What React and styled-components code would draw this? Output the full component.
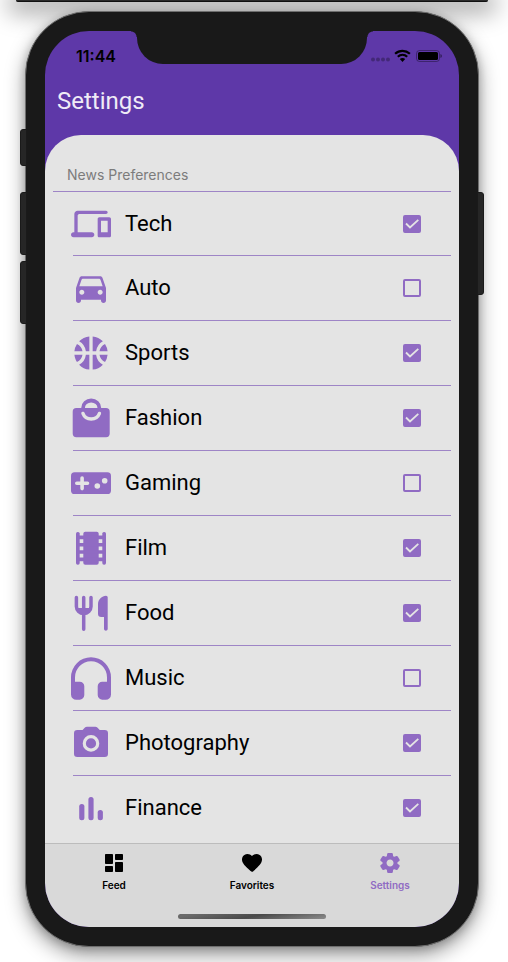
import React, { useState } from "react";
import styled, { createGlobalStyle, css } from "styled-components";
import { MdSportsBasketball } from "react-icons/md";

const colors = {
  header: "#5e38a8",
  accent: "#906bc3",
  rule: "#9e85c6",
  sheet: "#e4e4e4",
  tabs: "#d9d9d9",
  bezel: "#191919",
};

const GlobalStyle = createGlobalStyle`
  *, *::before, *::after { box-sizing: border-box; }
  body {
    margin: 0;
    background: #fff;
    font-family: Roboto, sans-serif;
  }
`;

const Page = styled.main`
  overflow: hidden;
  padding-bottom: 15px;
`;

const UpperDevice = styled.div`
  height: 2px;
  margin: 0 20px 0 16px;
  background: #2b2b2b;
  border-bottom: 1px solid #111;
  border-radius: 0 0 4px 4px;
  box-shadow: 0 2px 24px 8px rgba(0, 0, 0, 0.4);
`;

const Phone = styled.div`
  position: relative;
  margin: 9px 29px 0 25px;
  padding: 19px;
  border: 1px solid #6e6e6e;
  border-radius: 64px;
  background: ${colors.bezel};
  box-shadow: 0 8px 20px rgba(0, 0, 0, 0.4), 0 2px 8px rgba(0, 0, 0, 0.2);
`;

const SideButton = styled.span`
  position: absolute;
  top: ${(p) => p.$top}px;
  height: ${(p) => p.$height}px;
  width: 7px;
  background: #262626;
  border: 1px solid #1a1a1a;
  ${(p) =>
    p.$side === "left"
      ? css`
          left: -6px;
          border-radius: 3px 0 0 3px;
        `
      : css`
          right: -6px;
          border-radius: 0 3px 3px 0;
        `}
`;

const Screen = styled.div`
  position: relative;
  overflow: hidden;
  border-radius: 44px;
  background: ${colors.header};
`;

const Notch = styled.div`
  position: absolute;
  top: 0;
  left: 50%;
  width: 230px;
  height: 33px;
  transform: translateX(-50%);
  background: ${colors.bezel};
  border-radius: 0 0 26px 26px;

  &::before,
  &::after {
    content: "";
    position: absolute;
    top: 0;
    width: 6px;
    height: 6px;
  }
  &::before {
    right: 100%;
    background: radial-gradient(circle at 0 100%, transparent 5px, ${colors.bezel} 6px);
  }
  &::after {
    left: 100%;
    background: radial-gradient(circle at 100% 100%, transparent 5px, ${colors.bezel} 6px);
  }
`;

const StatusBar = styled.div`
  display: flex;
  align-items: center;
  justify-content: space-between;
  height: 50px;
  padding: 0 17px 0 31px;
`;

const Clock = styled.time`
  font: 600 16px/20px Inter, sans-serif;
  color: #000;
`;

const Indicators = styled.svg`
  width: 72px;
  height: 14px;
`;

const Title = styled.h1`
  margin: 0;
  padding: 4px 12px 18px;
  font: 400 24px/32px Roboto, sans-serif;
  color: #efebf6;
`;

const Sheet = styled.section`
  padding: 28px 8px 3px;
  border-radius: 36px 36px 0 0;
  background: ${colors.sheet};
`;

const SectionTitle = styled.h2`
  margin: 0;
  padding: 2px 14px 6px;
  border-bottom: 1px solid ${colors.rule};
  font: 400 14px/20px Inter, sans-serif;
  color: #7c7c7c;
`;

const List = styled.ul`
  margin: 0;
  padding: 0 0 0 20px;
  list-style: none;
`;

const Row = styled.li`
  height: 65px;

  &:first-child {
    height: 63px;
  }
  & + & {
    border-top: 1px solid ${colors.rule};
  }
`;

const RowLabel = styled.label`
  display: flex;
  align-items: center;
  gap: 14px;
  height: 100%;
  margin-left: -2px;
  padding-right: 30px;
  font-size: 22px;
  line-height: 28px;
  color: #000;
`;

const CategoryIcon = styled.svg`
  flex: none;
  width: 40px;
  height: 44px;
  fill: currentColor;
  color: ${colors.accent};
`;

const RowText = styled.span`
  flex: 1;
`;

const CheckWrap = styled.span`
  display: grid;
  place-items: center;

  & > * {
    grid-area: 1 / 1;
  }
`;

const CheckInput = styled.input`
  appearance: none;
  width: 18px;
  height: 18px;
  margin: 0;
  border: 2px solid ${colors.accent};
  border-radius: 2px;

  &:checked {
    background: ${colors.accent};
  }
  &:checked + svg {
    visibility: visible;
  }
`;

const CheckMark = styled.svg`
  visibility: hidden;
  width: 18px;
  height: 18px;
  pointer-events: none;
`;

const TabBar = styled.nav`
  display: grid;
  grid-template-columns: repeat(3, 1fr);
  padding-top: 7px;
  border-top: 1px solid #bcbcbc;
  background: ${colors.tabs};
`;

const Tab = styled.button`
  display: flex;
  flex-direction: column;
  align-items: center;
  gap: 4px;
  padding: 0;
  border: 0;
  background: none;
  font: 600 10px/12px Inter, sans-serif;
  color: ${(p) => (p.$active ? colors.accent : "#000")};
`;

const TabIcon = styled.svg`
  width: 24px;
  height: 24px;
  fill: currentColor;
`;

const HomeArea = styled.div`
  display: flex;
  justify-content: center;
  padding: 23px 0 8px;
  background: ${colors.tabs};
`;

const HomeIndicator = styled.div`
  width: 148px;
  height: 5px;
  border-radius: 3px;
  background: linear-gradient(170deg, #6a6a6a 10%, #4a4a4a 50%, #858585 95%);
`;

/* 24-unit glyphs are centred in the 40x44 icon box. */
const Glyph = ({ children }) => (
  <g transform="translate(0 2) scale(1.6667)">{children}</g>
);

const icons = {
  tech: (
    <Glyph>
      <path d="M4 7c0-.55.45-1 1-1h16c.55 0 1-.45 1-1s-.45-1-1-1H4c-1.1 0-2 .9-2 2v11h-.5c-.83 0-1.5.67-1.5 1.5S.67 20 1.5 20h11c.83 0 1.5-.67 1.5-1.5s-.67-1.5-1.5-1.5H4V7zm19 1h-6c-.55 0-1 .45-1 1v10c0 .55.45 1 1 1h6c.55 0 1-.45 1-1V9c0-.55-.45-1-1-1zm-1 9h-4v-7h4v7z" />
    </Glyph>
  ),
  auto: (
    <Glyph>
      <path d="M18.92 6.01C18.72 5.42 18.16 5 17.5 5h-11c-.66 0-1.21.42-1.42 1.01L3 12v7.5c0 .82.67 1.5 1.5 1.5S6 20.32 6 19.5V19h12v.5c0 .82.67 1.5 1.5 1.5s1.5-.68 1.5-1.5V12l-2.08-5.99zM6.5 16c-.83 0-1.5-.67-1.5-1.5S5.67 13 6.5 13s1.5.67 1.5 1.5S7.33 16 6.5 16zm11 0c-.83 0-1.5-.67-1.5-1.5s.67-1.5 1.5-1.5 1.5.67 1.5 1.5-.67 1.5-1.5 1.5zM5 11l1.27-3.82c.14-.4.52-.68.95-.68h9.56c.43 0 .81.28.95.68L19 11H5z" />
    </Glyph>
  ),
  sports: <MdSportsBasketball x="0" y="2" size={40} />,
  fashion: (
    <>
      <path
        fillRule="evenodd"
        d="M5.5 12H10.2A10 9.5 0 0 1 30.2 12H35A3.7 3.7 0 0 1 38.7 15.7V37.6A3.7 3.7 0 0 1 35 41.3H5.4A3.7 3.7 0 0 1 1.7 37.6V15.7A3.7 3.7 0 0 1 5.5 12ZM13.9 12H26.5A6.3 5.5 0 0 0 13.9 12Z"
      />
      <path
        d="M12 17.5C13.4 21.3 16.5 23 20.2 23S27 21.3 28.4 17.5"
        fill="none"
        stroke={colors.sheet}
        strokeWidth="3.5"
        strokeLinecap="round"
      />
    </>
  ),
  gaming: (
    <>
      <rect x="0" y="11.3" width="40" height="21.7" rx="3.6" />
      <path
        d="M5.8 22.3H16.5M11.1 17V27.6"
        stroke={colors.sheet}
        strokeWidth="3.6"
        strokeLinecap="round"
      />
      <circle cx="26.3" cy="25" r="2.8" fill={colors.sheet} />
      <circle cx="33.7" cy="19.7" r="2.8" fill={colors.sheet} />
    </>
  ),
  film: (
    <>
      <rect x="12.3" y="5.7" width="15.4" height="33" rx="2" />
      <rect x="5" y="5.9" width="3.7" height="32.8" rx="1.7" />
      <rect x="31.3" y="5.9" width="3.7" height="32.8" rx="1.7" />
      <path d="M7 9.5H33V13.3H7ZM7 17H33V20.6H7ZM7 24.3H33V27.7H7ZM7 31.6H33V35.3H7Z" />
    </>
  ),
  food: (
    <>
      <path
        d="M5.4 6.4V15.5A7.3 6.9 0 0 0 20 15.5V6.4M12.7 6.4V38.3M6.5 18.7H19"
        fill="none"
        stroke="currentColor"
        strokeWidth="3.5"
        strokeLinecap="round"
      />
      <path d="M36.7 6.3V38.2A1.9 1.9 0 0 1 33 38.2V26H30.2A3.2 3.2 0 0 1 27 22.8V13C27 8.5 31 4.7 35 4.7Q36.7 4.7 36.7 6.3Z" />
    </>
  ),
  music: (
    <path d="M0 21.3A20 20 0 0 1 40 21.3V38.4A5.3 5.3 0 0 1 34.7 43.7H31.3A4.6 4.6 0 0 1 26.7 39.1V30.3A4.6 4.6 0 0 1 31.3 25.7H36V21.3A16 16 0 0 0 4 21.3V25.7H8.7A4.6 4.6 0 0 1 13.3 30.3V39.1A4.6 4.6 0 0 1 8.7 43.7H5.3A5.3 5.3 0 0 1 0 38.4Z" />
  ),
  photography: (
    <>
      <path d="M6.3 9H11.6L13.7 6.7Q14.6 5.7 16 5.7H24.3Q25.7 5.7 26.6 6.7L28.7 9H33.7A3.3 3.3 0 0 1 37 12.3V32.7A3.3 3.3 0 0 1 33.7 36H6.3A3.3 3.3 0 0 1 3 32.7V12.3A3.3 3.3 0 0 1 6.3 9Z" />
      <circle cx="20" cy="22.4" r="6.7" fill="none" stroke={colors.sheet} strokeWidth="3.2" />
    </>
  ),
  finance: (
    <>
      <rect x="8.2" y="18" width="5.2" height="16.2" rx="2.5" />
      <rect x="17.4" y="11" width="5.2" height="23.2" rx="2.5" />
      <rect x="26.7" y="24" width="5.2" height="10.2" rx="2.5" />
    </>
  ),
};

const categories = [
  ["tech", "Tech", true],
  ["auto", "Auto", false],
  ["sports", "Sports", true],
  ["fashion", "Fashion", true],
  ["gaming", "Gaming", false],
  ["film", "Film", true],
  ["food", "Food", true],
  ["music", "Music", false],
  ["photography", "Photography", true],
  ["finance", "Finance", true],
];

const tabs = [
  {
    name: "Feed",
    path: "M4 13h6c.55 0 1-.45 1-1V4c0-.55-.45-1-1-1H4c-.55 0-1 .45-1 1v8c0 .55.45 1 1 1zm0 8h6c.55 0 1-.45 1-1v-4c0-.55-.45-1-1-1H4c-.55 0-1 .45-1 1v4c0 .55.45 1 1 1zm10 0h6c.55 0 1-.45 1-1v-8c0-.55-.45-1-1-1h-6c-.55 0-1 .45-1 1v8c0 .55.45 1 1 1zM13 4v4c0 .55.45 1 1 1h6c.55 0 1-.45 1-1V4c0-.55-.45-1-1-1h-6c-.55 0-1 .45-1 1z",
  },
  {
    name: "Favorites",
    path: "M13.35 20.13c-.76.69-1.93.69-2.69-.01l-.11-.1C5.3 15.27 1.87 12.16 2 8.28c.06-1.7.93-3.33 2.34-4.29 2.64-1.8 5.9-.96 7.66 1.1 1.76-2.06 5.02-2.91 7.66-1.1 1.41.96 2.28 2.59 2.34 4.29.14 3.88-3.3 6.99-8.55 11.76l-.1.09z",
  },
  {
    name: "Settings",
    path: "M19.5 12c0-.23-.01-.45-.03-.68l1.86-1.41c.4-.3.51-.86.26-1.3l-1.87-3.23c-.25-.44-.79-.62-1.25-.42l-2.15.91c-.37-.26-.76-.49-1.17-.68l-.29-2.31c-.06-.5-.49-.88-.99-.88h-3.73c-.51 0-.94.38-1 .88l-.29 2.31c-.41.19-.8.42-1.17.68l-2.15-.91c-.46-.2-1-.02-1.25.42L2.41 8.62c-.25.44-.14.99.26 1.3l1.86 1.41c-.02.22-.03.44-.03.67s.01.45.03.68l-1.86 1.41c-.4.3-.51.86-.26 1.3l1.87 3.23c.25.44.79.62 1.25.42l2.15-.91c.37.26.76.49 1.17.68l.29 2.31c.06.5.49.88.99.88h3.73c.5 0 .93-.38.99-.88l.29-2.31c.41-.19.8-.42 1.17-.68l2.15.91c.46.2 1 .02 1.25-.42l1.87-3.23c.25-.44.14-.99-.26-1.3l-1.86-1.41c.03-.23.04-.45.04-.68zm-7.46 3.5c-1.93 0-3.5-1.57-3.5-3.5s1.57-3.5 3.5-3.5 3.5 1.57 3.5 3.5-1.57 3.5-3.5 3.5z",
  },
];

function StatusIndicators() {
  return (
    <Indicators viewBox="0 0 72 14" aria-hidden="true">
      <g fill="#000" opacity="0.28">
        <circle cx="3" cy="10.5" r="2" />
        <circle cx="8" cy="10.5" r="2" />
        <circle cx="13" cy="10.5" r="2" />
        <circle cx="18" cy="10.5" r="2" />
      </g>
      <g fill="none" stroke="#000" strokeWidth="2.2">
        <path d="M25.1 4.8C29.4 0.9 35.6 0.9 39.9 4.8" />
        <path d="M27.8 7.8C30.5 5.3 34.5 5.3 37.2 7.8" />
      </g>
      <path d="M32.5 12.9L29.8 10.1C31.3 8.7 33.7 8.7 35.2 10.1Z" />
      <rect x="46.5" y="1.5" width="23" height="11" rx="3" fill="none" stroke="#000" opacity="0.35" />
      <rect x="48" y="3" width="20" height="8" rx="1.5" />
      <path d="M70.4 5V9Q72 8.4 72 7T70.4 5Z" opacity="0.45" />
    </Indicators>
  );
}

export default function App() {
  const [checked, setChecked] = useState(() =>
    Object.fromEntries(categories.map(([id, , on]) => [id, on]))
  );
  const [activeTab, setActiveTab] = useState("Settings");

  return (
    <Page>
      <GlobalStyle />
      <UpperDevice />
      <Phone>
        <SideButton $side="left" $top={117} $height={37} />
        <SideButton $side="left" $top={180} $height={63} />
        <SideButton $side="left" $top={249} $height={63} />
        <SideButton $side="right" $top={180} $height={103} />
        <Screen>
          <Notch />
          <StatusBar>
            <Clock>11:44</Clock>
            <StatusIndicators />
          </StatusBar>
          <Title>Settings</Title>
          <Sheet>
            <SectionTitle>News Preferences</SectionTitle>
            <List>
              {categories.map(([id, name]) => (
                <Row key={id}>
                  <RowLabel>
                    <CategoryIcon viewBox="0 0 40 44" aria-hidden="true">
                      {icons[id]}
                    </CategoryIcon>
                    <RowText>{name}</RowText>
                    <CheckWrap>
                      <CheckInput
                        type="checkbox"
                        checked={checked[id]}
                        onChange={(e) =>
                          setChecked({ ...checked, [id]: e.target.checked })
                        }
                      />
                      <CheckMark viewBox="0 0 18 18" aria-hidden="true">
                        <path
                          d="M3 8.5L7 12.5L15.3 4.8"
                          fill="none"
                          stroke={colors.sheet}
                          strokeWidth="1.8"
                        />
                      </CheckMark>
                    </CheckWrap>
                  </RowLabel>
                </Row>
              ))}
            </List>
          </Sheet>
          <TabBar>
            {tabs.map((tab) => (
              <Tab
                key={tab.name}
                type="button"
                $active={tab.name === activeTab}
                onClick={() => setActiveTab(tab.name)}
              >
                <TabIcon viewBox="0 0 24 24" aria-hidden="true">
                  <path d={tab.path} />
                </TabIcon>
                {tab.name}
              </Tab>
            ))}
          </TabBar>
          <HomeArea>
            <HomeIndicator />
          </HomeArea>
        </Screen>
      </Phone>
    </Page>
  );
}
